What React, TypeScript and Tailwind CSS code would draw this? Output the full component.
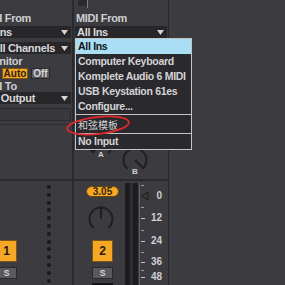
import React from 'react';

// Ableton-style I/O strip with the "MIDI From" chooser open

function Caret() {
  return (
    <svg width="7" height="5" viewBox="0 0 7 5" className="block shrink-0">
      <path d="M0 0H7L3.5 5Z" fill="#d4d4d6" />
    </svg>
  );
}

function Chooser({ label, pad }: { label: string; pad: string }) {
  return (
    <div className="mx-px flex h-[12px] items-center justify-between overflow-hidden bg-[#272629] pr-[3px]">
      <span className={`${pad} whitespace-nowrap text-[11px] leading-[12px] tracking-[-0.3px] text-[#d8d8da]`}>
        {label}
      </span>
      <Caret />
    </div>
  );
}

function Knob({ angle }: { angle: number }) {
  const r = 11.5;
  const a = (angle * Math.PI) / 180;
  const nx = 13 + r * Math.sin(a);
  const ny = 13 - r * Math.cos(a);
  return (
    <svg width="26" height="26" viewBox="0 0 26 26" className="block">
      <path d="M5.6 21.8A11.5 11.5 0 1 1 20.4 21.8" fill="none" stroke="#1f1e21" strokeWidth="2" />
      <line x1="13" y1="13" x2={nx} y2={ny} stroke="#1f1e21" strokeWidth="2" />
    </svg>
  );
}

// covered = the rows sit under the open menu
function IoSection({ covered }: { covered?: boolean }) {
  const hide = covered ? 'invisible' : '';
  return (
    <>
      <div className="flex h-[12px] shrink-0 items-start">
        <div className="ml-[4px] h-[6px] w-[9px] bg-[#2a292d]" />
        <div className="h-[8px] w-px bg-[#7d7c81]" />
      </div>
      <div className="h-[13px] shrink-0 whitespace-nowrap pl-[2px] text-[11px] leading-[13px] tracking-[-0.3px]">MIDI From</div>
      <div className="mt-px shrink-0">
        <Chooser label="All Ins" pad="pl-[2px]" />
      </div>
      <div className={`${hide} flex shrink-0 flex-col`}>
        <div className="mt-[4px]">
          <Chooser label="All Channels" pad="pl-[13px]" />
        </div>
        <div className="mt-px h-[12px] whitespace-nowrap pl-[6px] text-[11px] leading-[12px] tracking-[-0.3px]">Monitor</div>
        <div className="mt-px flex h-[11px] gap-[3px] pl-[2px] text-[10px] leading-[9px]">
          <div className="flex w-[19px] items-center justify-center border border-[#29282c] bg-[#5a595e] text-[#d6d6d8]">In</div>
          <div className="flex w-[26px] items-center justify-center border border-[#7a5712] bg-[#f6a725] text-[#2b2212]">Auto</div>
          <div className="flex w-[19px] items-center justify-center border border-[#29282c] bg-[#5a595e] text-[#d6d6d8]">Off</div>
        </div>
        <div className="mt-[2px] h-[11px] whitespace-nowrap pl-[2px] text-[11px] leading-[11px] tracking-[-0.3px]">MIDI To</div>
        <Chooser label="No Output" pad="pl-[5px]" />
        <div className="mx-px mt-[4px] h-[13px] border border-[#2a292d] bg-[#39383d]" />
      </div>
      <div className="mt-[3px] h-px shrink-0 bg-[#2a292d]" />
    </>
  );
}

const DOTS = Array.from({ length: 13 }, (_, i) => i);

function TrackOne() {
  return (
    <div className="-ml-[22px] flex w-[94px] shrink-0 flex-col">
      <IoSection />
      <div className="h-[54px] shrink-0" />
      <div className="h-[2px] shrink-0 bg-[#2a292d]" />
      <div className="flex min-h-0 flex-1 overflow-hidden">
        <div className="flex w-[48px] flex-col items-start">
          <div className="ml-[18px] mt-[59px] flex h-[22px] w-[21px] items-center justify-center border border-[#7a5712] bg-[#f6a725] text-[12px] text-[#241c0c]">1</div>
          <div className="ml-[18px] mt-[5px] flex h-[12px] w-[21px] items-center justify-center border border-[#29282c] bg-[#5a595e] text-[8.5px] text-[#d8d8da]">S</div>
        </div>
        <div className="ml-[21px] mt-[4px] flex flex-col gap-[3.8px]">
          {DOTS.map((d) => (
            <div key={d} className="h-[4px] w-[4px] shrink-0 rounded-full bg-[#1a191c]" />
          ))}
        </div>
      </div>
    </div>
  );
}

function Scale() {
  const minor = [4, 26, 49, 71, 89];
  const major = [37, 60, 81, 96];
  return (
    <div className="flex w-[27px] shrink-0">
      <svg width="9" height="104" viewBox="0 0 9 104" className="block shrink-0">
        {minor.map((y) => (
          <rect key={y} x="1" y={y} width="3" height="1" fill="#9d9ca1" />
        ))}
        {major.map((y) => (
          <rect key={y} x="1" y={y} width="4" height="1" fill="#c6c6c8" />
        ))}
        <polygon points="8,11 1.5,15 8,19" fill="none" stroke="#19181b" strokeWidth="1" />
      </svg>
      <div className="flex w-[13px] flex-col items-end text-[10px] leading-[10px] text-[#cfcfd1]">
        <span className="mt-[10px]">0</span>
        <span className="mt-[12px]">12</span>
        <span className="mt-[13px]">24</span>
        <span className="mt-[11px]">36</span>
        <span className="mt-[5px]">48</span>
      </div>
    </div>
  );
}

function TrackTwo() {
  return (
    <div className="flex w-[94px] shrink-0 flex-col">
      <IoSection covered />
      <div className="flex h-[54px] shrink-0 items-start text-[8px] leading-[8px]">
        <div className="ml-[14px] mt-[6px] flex flex-col items-center">
          <Knob angle={-135} />
          <span className="-mt-[6px]">A</span>
        </div>
        <div className="ml-[8px] mt-[22px] flex flex-col items-center">
          <Knob angle={135} />
          <span className="-mt-[5.5px]">B</span>
        </div>
      </div>
      <div className="h-[2px] shrink-0 bg-[#2a292d]" />
      <div className="flex min-h-0 flex-1 overflow-hidden">
        <div className="flex w-[48px] shrink-0 flex-col items-start">
          <div className="ml-[12px] mt-[5px] flex h-[11px] w-[33px] shrink-0 items-center justify-center rounded-full border border-[#5e4511] bg-[#f6a725] text-[10px] leading-none text-[#33270b]">
            3.05
          </div>
          <div className="ml-[14px] mt-[9px] shrink-0">
            <Knob angle={0} />
          </div>
          <div className="ml-[18px] mt-[8px] flex h-[22px] w-[21px] shrink-0 items-center justify-center border border-[#7a5712] bg-[#f6a725] text-[12px] text-[#241c0c]">2</div>
          <div className="ml-[18px] mt-[5px] flex h-[12px] w-[21px] shrink-0 items-center justify-center border border-[#29282c] bg-[#5a595e] text-[8.5px] text-[#d8d8da]">S</div>
          <div className="ml-[18px] mt-[4px] h-[6px] w-[21px] shrink-0 bg-[#141316]" />
        </div>
        <div className="ml-[3px] mt-[2px] flex w-[13px] shrink-0">
          <div className="w-[5px] bg-[#1d1c1f]" />
          <div className="w-[3px] bg-[#2f2e32]" />
          <div className="w-[5px] bg-[#1d1c1f]" />
        </div>
        <div className="ml-px mt-[2px] w-px shrink-0 bg-[#616065]" />
        <Scale />
      </div>
    </div>
  );
}

const ITEMS = ['Computer Keyboard', 'Komplete Audio 6 MIDI', 'USB Keystation 61es', 'Configure...'];

function InputMenu() {
  return (
    <div className="absolute left-[75px] top-[38px] z-10 w-[117px] border border-[#c4c4c6] bg-[#2a292d] text-[10.5px] leading-[15px] tracking-[-0.3px] text-[#d4d4d6]">
      <div className="h-[15px] whitespace-nowrap bg-[#a9def4] pl-[2px] text-[#141414]">All Ins</div>
      {ITEMS.map((item) => (
        <div key={item} className="h-[15px] whitespace-nowrap pl-[2px]">
          {item}
        </div>
      ))}
      <div className="h-px bg-[#c4c4c6]" />
      <div className="flex h-[18px] items-center pl-[2px] font-['Noto_Sans_CJK_SC',sans-serif] text-[10px] font-normal tracking-normal">
        和弦模板
      </div>
      <div className="h-px bg-[#c4c4c6]" />
      <div className="h-[15px] whitespace-nowrap pl-[2px]">No Input</div>
    </div>
  );
}

export default function App() {
  return (
    <div className="relative flex h-[285px] w-[285px] overflow-hidden bg-[#3c3b40] font-['Liberation_Sans',Arial,sans-serif] font-bold text-[#cfcfd1]">
      <TrackOne />
      <div className="w-[2px] shrink-0 bg-[#2a292d]" />
      <TrackTwo />
      <div className="w-px shrink-0 bg-[#2a292d]" />
      <div className="flex-1" />

      <InputMenu />

      {/* red hand-drawn circle around the chord-template entry */}
      <svg width="72" height="28" viewBox="0 0 72 28" className="pointer-events-none absolute left-[62px] top-[111px] z-20">
        <ellipse cx="36" cy="14.5" rx="31" ry="8.5" transform="rotate(-6 36 14.5)" fill="none" stroke="#e0282d" strokeWidth="1.8" />
      </svg>
    </div>
  );
}
